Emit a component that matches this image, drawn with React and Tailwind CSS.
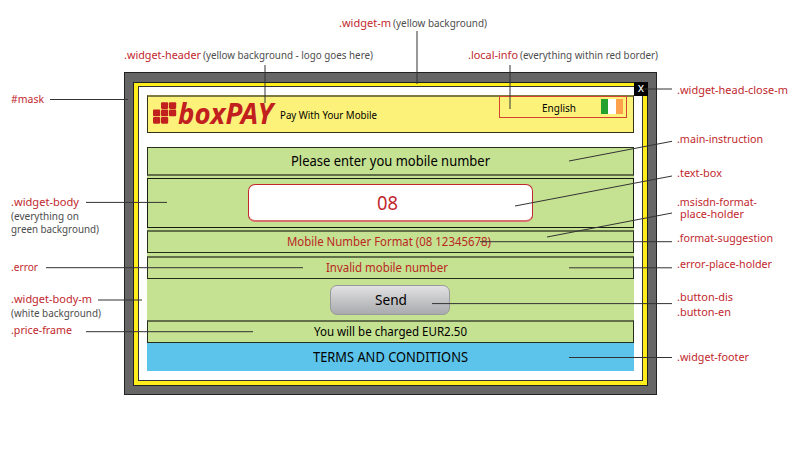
import { useLayoutEffect, useRef } from "react";
import clsx from "clsx";

/* Text condensed or stretched horizontally to an exact width. */
function Fit({ w, className, children }) {
  const outer = useRef(null);
  const inner = useRef(null);
  useLayoutEffect(() => {
    const natural = inner.current.getBoundingClientRect().width;
    outer.current.style.width = `${w}px`;
    inner.current.style.transform = `scaleX(${w / natural})`;
  }, [w]);
  return (
    <span ref={outer} className={clsx("block shrink-0 whitespace-nowrap", className)}>
      <span ref={inner} className="inline-block origin-left">
        {children}
      </span>
    </span>
  );
}

const labels = [
  { text: ".widget-m", w: 52, pos: "left-[339px] top-[17px]" },
  { text: "(yellow background)", w: 94, pos: "left-[393px] top-[17px]", note: true },
  { text: ".widget-header", w: 77, pos: "left-[124px] top-[49px]" },
  { text: "(yellow background - logo goes here)", w: 170, pos: "left-[203px] top-[49px]", note: true },
  { text: ".local-info", w: 50, pos: "left-[468px] top-[49px]" },
  { text: "(everything within red border)", w: 138, pos: "left-[520px] top-[49px]", note: true },
  { text: "#mask", w: 33, pos: "left-[11px] top-[93px]" },
  { text: ".widget-body", w: 68, pos: "left-[11px] top-[196px]" },
  { text: "(everything on", w: 68, pos: "left-[11px] top-[210px]", note: true },
  { text: "green background)", w: 88, pos: "left-[11px] top-[223px]", note: true },
  { text: ".error", w: 27, pos: "left-[11px] top-[261px]" },
  { text: ".widget-body-m", w: 81, pos: "left-[11px] top-[293px]" },
  { text: "(white background)", w: 90, pos: "left-[11px] top-[307px]", note: true },
  { text: ".price-frame", w: 61, pos: "left-[11px] top-[324px]" },
  { text: ".widget-head-close-m", w: 111, pos: "left-[677px] top-[84px]" },
  { text: ".main-instruction", w: 86, pos: "left-[677px] top-[133px]" },
  { text: ".text-box", w: 45, pos: "left-[677px] top-[167px]" },
  { text: ".msisdn-format-", w: 80, pos: "left-[677px] top-[196px]" },
  { text: "place-holder", w: 64, pos: "left-[680px] top-[208px]" },
  { text: ".format-suggestion", w: 96, pos: "left-[677px] top-[232px]" },
  { text: ".error-place-holder", w: 95, pos: "left-[677px] top-[258px]" },
  { text: ".button-dis", w: 56, pos: "left-[677px] top-[291px]" },
  { text: ".button-en", w: 54, pos: "left-[677px] top-[306px]" },
  { text: ".widget-footer", w: 72, pos: "left-[677px] top-[351px]" },
];

const leaders = [
  [417, 31, 417, 84],
  [265, 65, 265, 103],
  [510, 65, 510, 109],
  [50, 99.5, 128, 99.5],
  [86, 202.4, 167, 202.4],
  [46, 267.7, 303, 267.7],
  [98, 300, 142, 300],
  [86, 331.7, 253, 331.7],
  [643, 89, 672, 89],
  [569, 161, 672, 141.3],
  [515, 206, 672, 176],
  [547, 237, 672, 213],
  [480, 241.7, 672, 241.7],
  [569, 267.8, 672, 267.8],
  [432, 303.6, 672, 303.6],
  [569, 357.5, 672, 357.5],
];

function LogoMark() {
  const cells = [[8, 0], [16, 0], [0, 7.4], [8, 7.4], [16, 7.4], [0, 14.8], [8, 14.8]];
  return (
    <svg width="24" height="22" viewBox="0 0 24 22" className="mt-[5px] ml-[5px] shrink-0">
      {cells.map(([x, y]) => (
        <rect key={`${x}-${y}`} x={x} y={y + 0.2} width="7.2" height="6.7" rx="1.1" fill="#c1201f" />
      ))}
    </svg>
  );
}

function Header() {
  return (
    <header className="flex h-[38px] border border-t-2 border-[#333118] border-t-[#7f7a40] bg-[#fdf279]">
      <LogoMark />
      <Fit w={95} className="mt-[-3px] ml-px text-[28px] leading-[38px] font-bold italic text-[#c1201f]">
        boxPAY
      </Fit>
      <Fit w={97} className="mt-[10px] ml-[7px] text-[11px] leading-4">Pay With Your Mobile</Fit>
      <div className="-mt-px mr-[6px] ml-auto flex h-[22px] w-[128px] items-start border border-[#d4432f]">
        <Fit w={34} className="mt-[3px] ml-[42px] text-[11px] leading-4">English</Fit>
        <div className="mt-[2px] mr-[3px] ml-auto grid h-[15px] w-[22px] grid-cols-3">
          <div className="bg-[#22a12e]" />
          <div className="bg-white" />
          <div className="bg-[#ffa04d]" />
        </div>
      </div>
    </header>
  );
}

function Body() {
  return (
    <main className="mt-[14px] flex flex-col bg-[#c5e192]">
      <div className="flex h-[29px] justify-center border border-b-2 border-[#272d1d] border-b-[#62704a]">
        <Fit w={199} className="mt-[3px] mr-px text-[14px] leading-5">Please enter you mobile number</Fit>
      </div>
      <div className="mt-[2px] flex h-[50px] justify-center border border-[#171b10] pt-[5px]">
        <div className="mr-px flex h-[38px] w-[285px] justify-center rounded-[7px] border border-b-2 border-[#c1272d] border-b-[#d9706f] bg-white">
          <Fit w={21} className="mt-[4px] mr-[5px] text-[19px] leading-7 text-[#c1272d]">08</Fit>
        </div>
      </div>
      <div className="mt-[2px] flex h-[23px] justify-center border border-t-2 border-[#272d1d] border-t-[#62704a] text-[#b9271f]">
        <Fit w={204} className="mt-[2px] mr-[3px] text-[12px] leading-4">Mobile Number Format (08 12345678)</Fit>
      </div>
      <div className="mt-[3px] flex h-[23px] justify-center border border-t-2 border-[#272d1d] border-t-[#62704a] text-[#b9271f]">
        <Fit w={122} className="mt-[2px] mr-[7px] text-[12px] leading-4">Invalid mobile number</Fit>
      </div>
      <div className="flex h-[41px] justify-center pt-[6px]">
        <button className="mr-px flex h-[30px] w-[120px] justify-center rounded-[7px] border border-[#98999b] bg-linear-to-b from-[#e2e2e3] to-[#a9aaad]">
          <Fit w={32} className="mt-[4px] ml-px text-[14px] leading-5">Send</Fit>
        </button>
      </div>
      <div className="flex h-[23px] justify-center border border-t-2 border-[#272d1d] border-t-[#62704a]">
        <Fit w={153} className="mt-[2px] mr-px text-[12px] leading-4">You will be charged EUR2.50</Fit>
      </div>
    </main>
  );
}

export default function App() {
  return (
    <div className="relative h-[454px] w-[800px] overflow-hidden bg-white font-['Noto_Sans',sans-serif] text-black">
      <div className="pt-[72px] pl-[124px]">
        <div className="h-[323px] w-[533px] border border-[#222] bg-[#666] pt-[9px] pl-[8px]">
          <div className="h-[304px] w-[515px] border border-[#222] bg-[#ffed1c] pt-[3px] pl-[4px]">
            <div className="h-[295px] w-[505px] border border-[#333] bg-white pt-[8px] pr-[8px] pl-[8px]">
              <Header />
              <Body />
              <footer className="flex h-[28px] justify-center bg-[#5cc4ea]">
                <Fit w={155} className="mt-[4px] text-[14px] leading-5">TERMS AND CONDITIONS</Fit>
              </footer>
            </div>
          </div>
        </div>
      </div>

      <button className="absolute top-[82px] left-[634px] flex h-[14px] w-[14px] items-center justify-center bg-black pb-[3px] text-[12px] leading-none text-white">
        x
      </button>

      <svg width="800" height="454" viewBox="0 0 800 454" className="pointer-events-none absolute inset-0">
        {leaders.map(([x1, y1, x2, y2]) => (
          <line key={`${x1}-${y1}`} x1={x1} y1={y1} x2={x2} y2={y2} stroke="#333" strokeWidth="1" />
        ))}
      </svg>

      {labels.map(({ text, w, pos, note }) => (
        <div
          key={text}
          className={clsx("absolute leading-3", pos, note ? "text-[10.5px] text-[#4d4d4d]" : "text-[11px] text-[#c1272d]")}
        >
          <Fit w={w}>{text}</Fit>
        </div>
      ))}
    </div>
  );
}
